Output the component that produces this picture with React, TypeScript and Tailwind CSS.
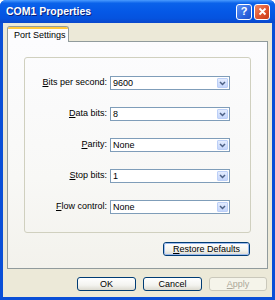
const FONT = "font-['Tahoma','Liberation_Sans',sans-serif]";

const FIELDS = [
  { key: "B", rest: "its per second:", value: "9600" },
  { key: "D", rest: "ata bits:", value: "8" },
  { key: "P", rest: "arity:", value: "None" },
  { key: "S", rest: "top bits:", value: "1" },
  { key: "F", rest: "low control:", value: "None" },
];

function Combo({ value }: { value: string }) {
  return (
    <div className="flex h-[14px] w-[120px] items-stretch border border-[#7f9db9] bg-white">
      <span className="flex-1 pl-[2px] text-[9px] leading-[12px] text-black">{value}</span>
      <span className="m-px flex w-[11px] items-center justify-center rounded-[1px] border border-[#bccff7] bg-[linear-gradient(180deg,#e3ecfe_0%,#c5d6fb_100%)]">
        <svg width="7" height="5" viewBox="0 0 7 5" aria-hidden="true">
          <path d="M1 1 L3.5 3.5 L6 1" fill="none" stroke="#4d6185" strokeWidth="1.5" />
        </svg>
      </span>
    </div>
  );
}

function XpButton({
  children,
  disabled,
  width,
}: {
  children: React.ReactNode;
  disabled?: boolean;
  width: string;
}) {
  return (
    <button
      type="button"
      className={
        "flex h-[14px] items-center justify-center rounded-[3px] border text-[9px] leading-none " +
        width +
        (disabled
          ? " border-[#cac8bb] bg-[#f5f4ea] text-[#aca899]"
          : " border-[#003c74] bg-[linear-gradient(180deg,#ffffff_0%,#f3f3ef_60%,#dcdad0_100%)] text-black")
      }
    >
      {children}
    </button>
  );
}

export default function App() {
  return (
    <div className={`${FONT} flex h-[300px] w-[275px] flex-col overflow-hidden rounded-t-[6px] bg-[#0a4fd7]`}>
      {/* title bar */}
      <div className="flex h-[23px] shrink-0 items-center bg-[linear-gradient(180deg,#4a9bff_0%,#0a62ea_14%,#0558e6_50%,#0553df_80%,#0a47cb_100%)] pl-[6px] pr-[5px]">
        <span className="flex-1 text-[10.5px] font-bold text-white [text-shadow:1px_1px_0_#0a1f7a]">
          COM1 Properties
        </span>
        <span className="mr-[2px] flex h-[16px] w-[16px] items-center justify-center rounded-[3px] border border-white bg-[linear-gradient(135deg,#5d92f5_0%,#2e66e0_60%,#1f4fc8_100%)] text-[11px] font-bold leading-none text-white">
          ?
        </span>
        <span className="flex h-[16px] w-[16px] items-center justify-center rounded-[3px] border border-white bg-[linear-gradient(135deg,#f08a66_0%,#e0542f_55%,#c63a17_100%)]">
          <svg width="9" height="9" viewBox="0 0 9 9" aria-hidden="true">
            <path d="M1.5 1.5 L7.5 7.5 M7.5 1.5 L1.5 7.5" stroke="#fff" strokeWidth="1.8" />
          </svg>
        </span>
      </div>

      {/* dialog body */}
      <div className="mx-[3px] mb-[3px] flex flex-1 flex-col bg-[#ece9d8]">
        <div className="flex pl-[4px] pt-[3px]">
          <div className="-mb-px z-10 flex h-[16px] w-[62px] flex-col rounded-t-[3px] border border-b-0 border-[#919b9c] bg-[#fcfcfe]">
            <div className="h-[2px] rounded-t-[2px] bg-[#ffc83c]" />
            <span className="pl-[6px] text-[9px] leading-[12px] text-black">Port Settings</span>
          </div>
        </div>

        <div className="mx-[4px] flex h-[228px] flex-col border border-[#919b9c] bg-[linear-gradient(180deg,#fcfcfe_0%,#f8f8f6_60%,#f3f2ec_100%)]">
          <div className="mx-[16px] mt-[15px] flex h-[176px] flex-col gap-[17px] rounded-[3px] border border-[#d0d0bf] pt-[18px]">
            {FIELDS.map((f) => (
              <div key={f.key} className="flex items-center">
                <span className="w-[82px] text-right text-[9px] text-black">
                  <span className="underline">{f.key}</span>
                  {f.rest}
                </span>
                <span className="ml-[3px]">
                  <Combo value={f.value} />
                </span>
              </div>
            ))}
          </div>
          <div className="mr-[17px] mt-[9px] flex justify-end">
            <XpButton width="w-[87px]">
              <span className="flex h-full w-full items-center justify-center rounded-[2px] border border-[#9cb9ed]">
                <span className="underline">R</span>estore Defaults
              </span>
            </XpButton>
          </div>
        </div>

        <div className="mr-[5px] mt-[8px] flex justify-end gap-[7px]">
          <XpButton width="w-[59px]">OK</XpButton>
          <XpButton width="w-[59px]">Cancel</XpButton>
          <XpButton width="w-[58px]" disabled>
            <span>
              <span className="underline">A</span>pply
            </span>
          </XpButton>
        </div>
      </div>
    </div>
  );
}
